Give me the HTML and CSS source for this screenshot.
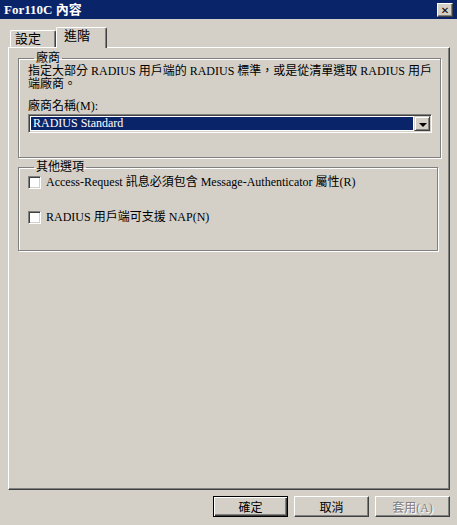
FILE: index.html
```html
<!DOCTYPE html>
<html>
<head>
    <title>For110C 內容</title>
    <link rel="stylesheet" href="styles.css">
</head>
<body>
    <div class="window">
        <div class="titlebar">
            <span class="title">For110C 內容</span>
            <button class="close" type="button">&#x2715;</button>
        </div>

        <div class="tabs">
            <div class="tab">設定</div>
            <div class="tab active">進階</div>
        </div>

        <div class="panel">
            <fieldset class="group vendor">
                <legend>廠商</legend>
                <p class="desc">指定大部分 RADIUS 用戶端的 RADIUS 標準，或是從清單選取 RADIUS 用戶<br>端廠商。</p>
                <label class="field-label">廠商名稱(M):</label>
                <div class="combo">
                    <span class="combo-value">RADIUS Standard</span>
                    <span class="combo-arrow"></span>
                </div>
            </fieldset>

            <fieldset class="group options">
                <legend>其他選項</legend>
                <label class="check"><input type="checkbox">Access-Request 訊息必須包含 Message-Authenticator 屬性(R)</label>
                <label class="check"><input type="checkbox">RADIUS 用戶端可支援 NAP(N)</label>
            </fieldset>
        </div>

        <div class="buttons">
            <button class="btn default" type="button">確定</button>
            <button class="btn" type="button">取消</button>
            <button class="btn" type="button" disabled>套用(A)</button>
        </div>
    </div>
</body>
</html>
```

FILE: styles.css
```css
body {
    margin: 0;
    background-color: #d4d0c8;
    font-family: "Liberation Serif", "Noto Sans CJK TC", serif;
    font-size: 12px;
    color: #000;
}
.window {
    width: 457px;
    height: 525px;
    background-color: #d4d0c8;
    overflow: hidden;
}
.titlebar {
    height: 19px;
    background-color: #0a246a;
    display: flex;
    align-items: center;
    justify-content: space-between;
    padding: 0 4px 0 4px;
}
.title {
    color: #fff;
    font-weight: bold;
    font-size: 13px;
    line-height: 19px;
}
.close {
    width: 16px;
    height: 14px;
    padding: 0;
    margin-top: 1px;
    background: #d4d0c8;
    border: 1px solid;
    border-color: #fff #404040 #404040 #fff;
    box-shadow: inset -1px -1px #808080;
    font-family: "DejaVu Sans", sans-serif;
    font-size: 10px;
    font-weight: bold;
    line-height: 11px;
    color: #000;
}
.tabs {
    height: 28px;
    display: flex;
    align-items: flex-end;
    padding-left: 10px;
    box-sizing: border-box;
    position: relative;
    z-index: 1;
}
.tab {
    width: 46px;
    height: 17px;
    box-sizing: border-box;
    border: 1px solid;
    border-bottom: none;
    border-color: #fff #404040 #fff #fff;
    border-radius: 2px 2px 0 0;
    box-shadow: inset -1px 0 #808080;
    background: #d4d0c8;
    font-size: 13px;
    line-height: 16px;
    padding-left: 4px;
}
.tab.active {
    width: 51px;
    height: 21px;
    margin-bottom: -1px;
    padding-left: 7px;
    line-height: 16px;
}
.panel {
    margin-left: 8px;
    width: 442px;
    height: 443px;
    box-sizing: border-box;
    border: 1px solid;
    border-color: #fff #404040 #404040 #fff;
    box-shadow: inset -1px -1px #808080;
    padding: 4px 11px 0 9px;
}
.group {
    margin: 0;
    padding: 0 8px 0 9px;
    border: 1px solid #808080;
    box-shadow: inset 1px 1px #fff, 1px 1px #fff;
}
.group legend {
    padding: 0 2px;
    margin-left: 6px;
    line-height: 12px;
    font-size: 12px;
}
.vendor {
    height: 106px;
    box-sizing: border-box;
}
.desc {
    margin: 1px 0 0 0;
    line-height: 13px;
    white-space: nowrap;
}
.field-label {
    display: block;
    margin-top: 9px;
    line-height: 12px;
}
.combo {
    margin-top: 2px;
    height: 19px;
    box-sizing: border-box;
    border: 1px solid;
    border-color: #808080 #fff #fff #808080;
    box-shadow: inset 1px 1px #404040, inset -1px -1px #d4d0c8;
    background: #fff;
    padding: 2px;
    display: flex;
}
.combo-value {
    flex: 1;
    background: #0a246a;
    color: #fff;
    line-height: 13px;
    padding-left: 2px;
    margin-right: 1px;
}
.combo-arrow {
    width: 16px;
    box-sizing: border-box;
    margin: -1px -1px -1px 0;
    background: #d4d0c8;
    border: 1px solid;
    border-color: #d4d0c8 #404040 #404040 #d4d0c8;
    box-shadow: inset 1px 1px #fff, inset -1px -1px #808080;
    position: relative;
}
.combo-arrow::after {
    content: "";
    position: absolute;
    left: 4px;
    top: 6px;
    border-left: 4px solid transparent;
    border-right: 4px solid transparent;
    border-top: 4px solid #000;
}
.options {
    margin-top: 3px;
    height: 90px;
    box-sizing: border-box;
    padding-left: 9px;
}
.check {
    display: flex;
    align-items: center;
    gap: 5px;
    line-height: 13px;
    margin-top: 3px;
    white-space: nowrap;
}
.check + .check {
    margin-top: 22px;
}
.check input {
    appearance: none;
    margin: 0;
    width: 13px;
    height: 13px;
    box-sizing: border-box;
    border: 1px solid;
    border-color: #808080 #fff #fff #808080;
    box-shadow: inset 1px 1px #404040, inset -1px -1px #d4d0c8;
    background: #fff;
}
.buttons {
    display: flex;
    justify-content: flex-end;
    gap: 6px;
    padding: 6px 7px 0 0;
}
.btn {
    width: 75px;
    height: 21px;
    padding: 0;
    background: #d4d0c8;
    border: 1px solid;
    border-color: #fff #404040 #404040 #fff;
    box-shadow: inset -1px -1px #808080;
    font-family: "Liberation Serif", "Noto Sans CJK TC", serif;
    font-size: 12px;
    color: #000;
}
.btn.default {
    border: 1px solid #000;
    box-shadow: inset 1px 1px #fff, inset -1px -1px #404040, inset -2px -2px #808080;
}
.btn:disabled {
    color: #808080;
    text-shadow: 1px 1px #fff;
}
```
